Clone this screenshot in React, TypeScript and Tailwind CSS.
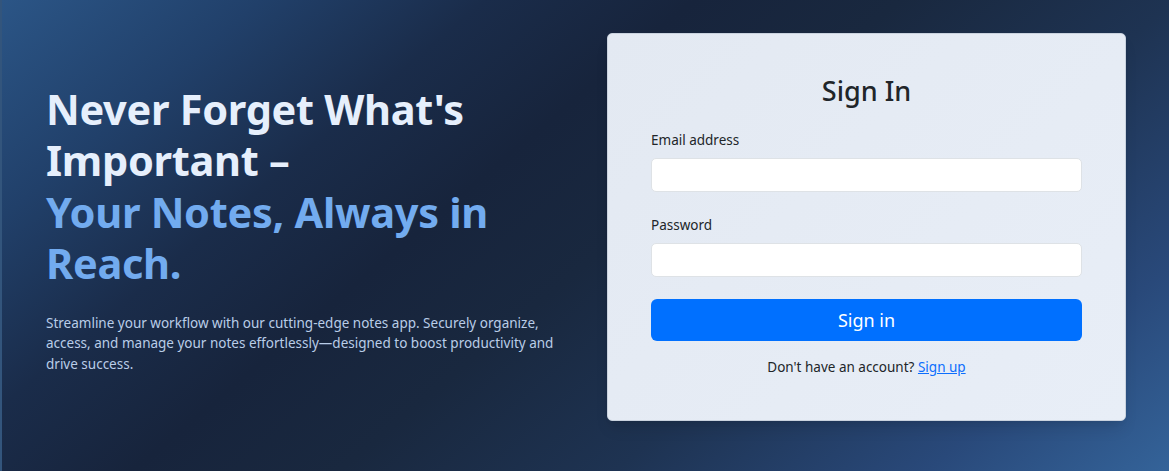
export default function App() {
  return (
    <div
      className="w-full h-[471px] overflow-hidden border-l-2 border-[#33557c] bg-[linear-gradient(140deg,#2b5586_0%,#21406a_15%,#1a2c4a_28%,#17243c_40%,#19283f_52%,#1e3352_68%,#29497a_86%,#346399_100%)] flex items-center pb-[17px]"
      style={{ fontFamily: '"Noto Sans", "Open Sans", sans-serif' }}
    >
      <div className="flex w-full items-center pl-[44px] pr-[43px]">
        {/* Left hero text */}
        <div className="w-[560px] shrink-0 pr-[30px] mt-[4px]">
          <h1 className="text-[41.5px] leading-[51.5px] font-bold text-[#e6effc] tracking-[-0.3px]">
            Never Forget What's Important –
            <br />
            <span className="text-[#72abef]">Your Notes, Always in Reach.</span>
          </h1>
          <p className="mt-[23px] text-[13.5px] leading-[20.5px] text-[#b9cde8]">
            Streamline your workflow with our cutting-edge notes app. Securely organize,
            access, and manage your notes effortlessly—designed to boost productivity and
            drive success.
          </p>
        </div>

        {/* Sign in card */}
        <div className="ml-auto w-[519px] h-[388px] rounded-[5px] border border-[#c9d2de] bg-[linear-gradient(135deg,#e3e9f2,#e8eef7)] shadow-lg px-[43px] pt-[40px]">
          <h3 className="text-center text-[27px] leading-[34px] font-medium text-[#212529]">
            Sign In
          </h3>
          <div className="mt-[23px]">
            <label className="block text-[13.5px] leading-[18px] text-[#212529]">Email address</label>
            <input
              type="email"
              className="mt-[9px] block w-full h-[34px] rounded-[5px] border border-[#dee2e6] bg-white"
            />
          </div>
          <div className="mt-[24px]">
            <label className="block text-[13.5px] leading-[18px] text-[#212529]">Password</label>
            <input
              type="password"
              className="mt-[9px] block w-full h-[34px] rounded-[5px] border border-[#dee2e6] bg-white"
            />
          </div>
          <button className="mt-[22px] w-full h-[42px] rounded-[6px] bg-[#0070ff] text-white text-[18px]">
            Sign in
          </button>
          <p className="mt-[16px] text-center text-[13.5px] text-[#212529]">
            Don't have an account?{" "}
            <a href="#" className="text-[#0d6efd] underline">
              Sign up
            </a>
          </p>
        </div>
      </div>
    </div>
  );
}
